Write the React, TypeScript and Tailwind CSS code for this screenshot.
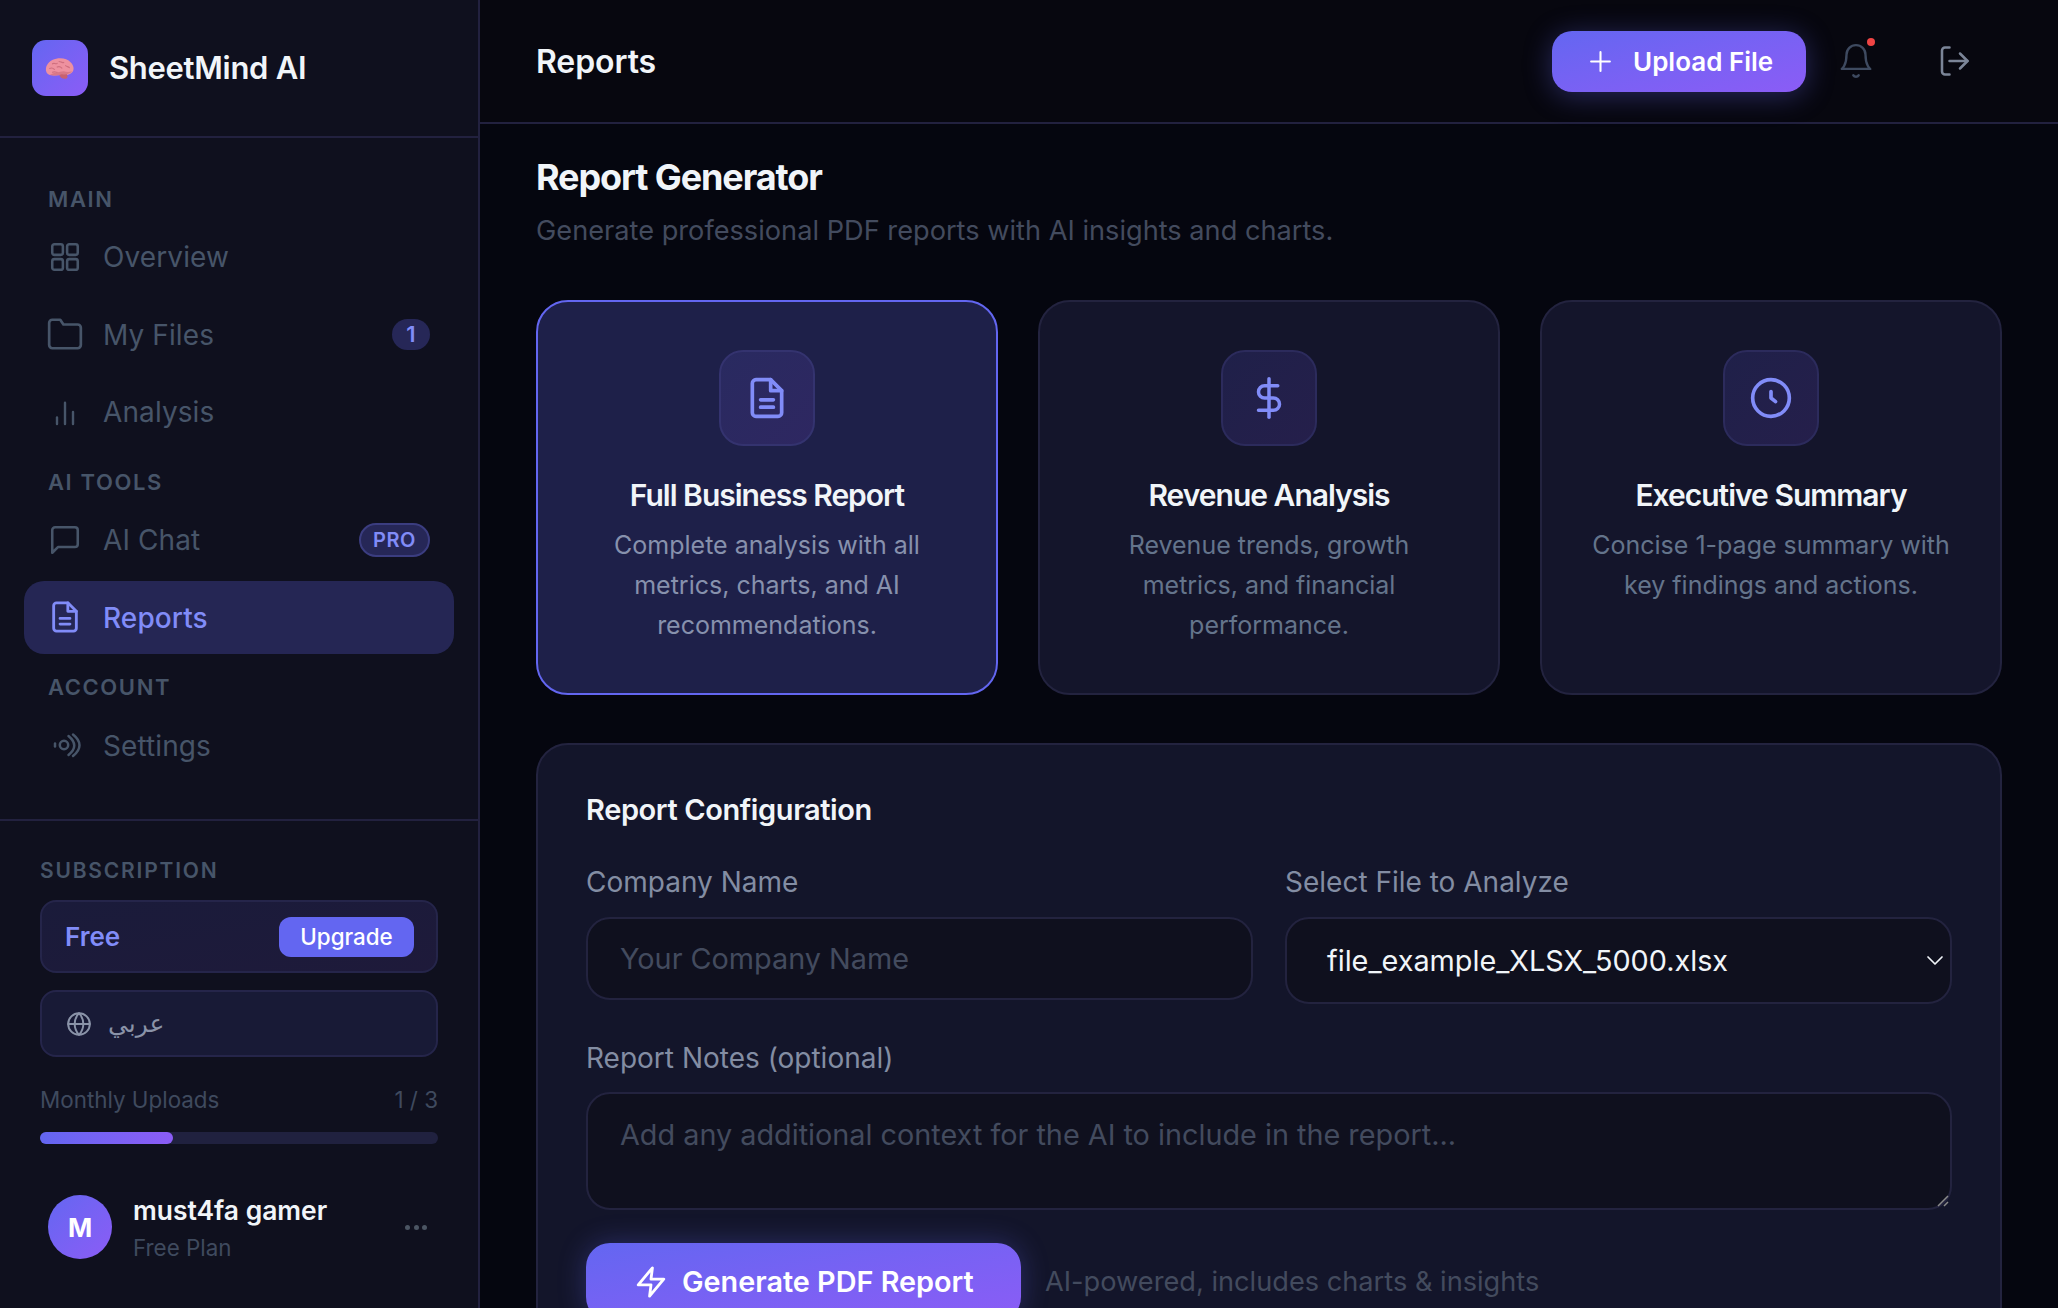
import React from "react";

const font = "font-['Inter','DejaVu_Sans',sans-serif]";

function Ic({ className, children, sw = 2 }: { className?: string; children: React.ReactNode; sw?: number }) {
  return (
    <svg viewBox="0 0 24 24" fill="none" stroke="currentColor" strokeWidth={sw} strokeLinecap="round" strokeLinejoin="round" className={className}>
      {children}
    </svg>
  );
}

const DocIcon = ({ className }: { className?: string }) => (
  <Ic className={className}>
    <path d="M14 2H6a2 2 0 0 0-2 2v16a2 2 0 0 0 2 2h12a2 2 0 0 0 2-2V8z" />
    <path d="M14 2v6h6" />
    <path d="M8.500 13h7M8.500 17h7" />
  </Ic>
);

function Brain() {
  return (
    <svg viewBox="0 0 32 24" className="w-[30px] h-[23px]">
      <path d="M5 19c-3-1-4.500-4-4-7C1.500 7 6 2.500 12 1.500c6-1 12 0 15.500 4 3 3 4 7 2 10-1.500 2-4 3.500-7 3.500-1 0-3 0-4 0-4 0-9 1-13.500 0z" fill="#ee919f" />
      <path d="M15 18c1 3 3 5 6 5 2 0 3-1 3-2.500L23 17z" fill="#c7616f" />
      <path d="M5 19c5 1 9 0 13-1 4 1 8 0 11-3-3 1-6 1-9 0-5 1-10 1-15 4z" fill="#d97887" />
      <path d="M8 7c2-1.500 3 1 5-.5M15 4.500c2 0 3 2 5 1M5 12c2-1 4 0 5 1M13 10.500c2-1 4 0 5 1M22 9c1 1 3 1 4 2M8 16c2-1 3 0 5 0" stroke="#cf6f7f" strokeWidth="1.200" fill="none" strokeLinecap="round" />
    </svg>
  );
}

function SectionLabel({ children, className = "" }: { children: React.ReactNode; className?: string }) {
  return <div className={`text-[22px] leading-[28px] font-semibold tracking-[1.6px] text-[#475569] ${className}`}>{children}</div>;
}

function NavItem({ icon, label, active, right }: { icon: React.ReactNode; label: string; active?: boolean; right?: React.ReactNode }) {
  return (
    <div className={`flex items-center h-[73px] rounded-[20px] pl-[25px] pr-[24px] mb-[4.500px] ${active ? "bg-[#252654] text-[#818cf8] font-medium" : "text-[#475569] font-normal"}`}>
      <div className="w-[32px] h-[32px] flex items-center justify-center shrink-0">{icon}</div>
      <span className="ml-[22px] pt-[1px] text-[28px] leading-none tracking-[0.1px]">{label}</span>
      {right && <div className="ml-auto">{right}</div>}
    </div>
  );
}

function Sidebar() {
  return (
    <aside className="w-[480px] shrink-0 h-full bg-[#0f101e] border-r-2 border-[#22213f] flex flex-col">
      <div className="h-[138px] shrink-0 border-b-2 border-[#22213f] flex items-center pl-[32px]">
        <div className="w-[56px] h-[56px] rounded-[14px] bg-gradient-to-br from-[#6366f1] to-[#8b5cf6] flex items-center justify-center">
          <Brain />
        </div>
        <span className="ml-[21px] text-[31px] font-semibold text-[#f1f5f9] tracking-[-0.3px]">SheetMind AI</span>
      </div>
      <nav className="h-[681px] shrink-0 px-[24px] pt-[46.500px]">
        <SectionLabel className="pl-[24px] mb-[7.500px]">MAIN</SectionLabel>
        <NavItem
          label="Overview"
          icon={
            <Ic className="w-[34px] h-[34px] shrink-0" sw={1.800}>
              <rect x="3" y="3" width="7.500" height="7.500" rx="1.500" />
              <rect x="13.500" y="3" width="7.500" height="7.500" rx="1.500" />
              <rect x="3" y="13.500" width="7.500" height="7.500" rx="1.500" />
              <rect x="13.500" y="13.500" width="7.500" height="7.500" rx="1.500" />
            </Ic>
          }
        />
        <NavItem
          label="My Files"
          icon={
            <Ic className="w-[38px] h-[38px] shrink-0" sw={1.700}>
              <path d="M22 19a2 2 0 0 1-2 2H4a2 2 0 0 1-2-2V5a2 2 0 0 1 2-2h5l2 3h9a2 2 0 0 1 2 2z" />
            </Ic>
          }
          right={
            <div className="w-[38px] h-[31px] rounded-full bg-[#262757] text-[#818cf8] text-[22px] font-semibold flex items-center justify-center">1</div>
          }
        />
        <NavItem
          label="Analysis"
          icon={
            <Ic className="w-[32px] h-[32px] shrink-0" sw={1.800}>
              <path d="M18 21v-9M12 21V5M6 21v-5" />
            </Ic>
          }
        />
        <SectionLabel className="pl-[24px] mt-[19.500px] mb-[7.500px]">AI TOOLS</SectionLabel>
        <NavItem
          label="AI Chat"
          icon={
            <Ic className="w-[34px] h-[34px] shrink-0" sw={1.800}>
              <path d="M21 15a2 2 0 0 1-2 2H7l-4 4V5a2 2 0 0 1 2-2h14a2 2 0 0 1 2 2z" />
            </Ic>
          }
          right={
            <div className="w-[71px] h-[34px] rounded-full bg-[#262757] border-2 border-[#3b3d80] text-[#818cf8] text-[20px] font-semibold tracking-[0.5px] flex items-center justify-center">PRO</div>
          }
        />
        <NavItem active label="Reports" icon={<DocIcon className="w-[34px] h-[34px] shrink-0" />} />
        <SectionLabel className="pl-[24px] mt-[19.500px] mb-[7.500px]">ACCOUNT</SectionLabel>
        <NavItem
          label="Settings"
          icon={
            <svg viewBox="0 0 32 32" fill="none" stroke="currentColor" strokeWidth="2.500" strokeLinecap="round" className="w-[32px] h-[32px]">
              <path d="M6 14.500v3" />
              <circle cx="15" cy="16" r="4.200" />
              <path d="M19.500 7Q31 16.500 19.500 26" />
              <path d="M24 5.500Q37 16 24 27" />
            </svg>
          }
        />
      </nav>
      <div className="flex-1 border-t-2 border-[#22213f] px-[40px] pt-[36px]">
        <div className="text-[21px] leading-[28px] font-semibold tracking-[1.8px] text-[#475569]">SUBSCRIPTION</div>
        <div className="mt-[15px] h-[73px] rounded-[16px] border-2 border-[#25254a] bg-gradient-to-br from-[#1a1b3a] to-[#1e1a3a] flex items-center justify-between pl-[23px] pr-[22px]">
          <span className="text-[26px] font-semibold text-[#818cf8]">Free</span>
          <div className="w-[135px] h-[40px] rounded-[12px] bg-[#6366f1] text-white text-[22.400px] font-medium flex items-center justify-center">Upgrade</div>
        </div>
        <div className="mt-[17px] h-[67px] rounded-[16px] border-2 border-[#25254a] bg-[#181a36] flex items-center pl-[24px] text-[#8a93a8]">
          <Ic className="w-[26px] h-[26px]" sw={1.800}>
            <circle cx="12" cy="12" r="10" />
            <path d="M2 12h20" />
            <path d="M12 2a15 15 0 0 1 4 10 15 15 0 0 1-4 10 15 15 0 0 1-4-10 15 15 0 0 1 4-10z" />
          </Ic>
          <span className="ml-[16px] text-[25px] leading-none">عربي</span>
        </div>
        <div className="mt-[28px] flex justify-between text-[22.400px] leading-[30px] text-[#3f4a5e]">
          <span>Monthly Uploads</span>
          <span>1 / 3</span>
        </div>
        <div className="mt-[17px] h-[12px] rounded-full bg-[#20213f]">
          <div className="h-full rounded-full bg-gradient-to-r from-[#6366f1] to-[#8b5cf6] w-[133px]" />
        </div>
        <div className="mt-[47px] flex items-center pl-[8px]">
          <div className="w-[64px] h-[64px] rounded-full bg-gradient-to-br from-[#6366f1] to-[#8b5cf6] text-white text-[26px] font-bold flex items-center justify-center">M</div>
          <div className="ml-[21px] mt-[2px]">
            <div className="text-[26.400px] leading-[34px] font-semibold text-[#f1f5f9]">must4fa gamer</div>
            <div className="mt-[6px] text-[22.400px] leading-[30px] text-[#3f4a5e]">Free Plan</div>
          </div>
          <div className="ml-auto mr-[11px] flex gap-[3.500px]">
            <span className="w-[5px] h-[5px] rounded-full bg-[#4b5563]" />
            <span className="w-[5px] h-[5px] rounded-full bg-[#4b5563]" />
            <span className="w-[5px] h-[5px] rounded-full bg-[#4b5563]" />
          </div>
        </div>
      </div>
    </aside>
  );
}

function Header() {
  return (
    <header className="h-[124px] shrink-0 border-b-2 border-[#22213f] flex items-center pl-[56px] bg-[#07070f]">
      <h1 className="pt-[2px] text-[32px] font-semibold text-[#f1f5f9] tracking-[-0.1px]">Reports</h1>
      <div className="ml-auto h-[61px] w-[254px] rounded-[20px] bg-gradient-to-br from-[#6366f1] to-[#8b5cf6] shadow-[0_4px_28px_rgba(99,102,241,0.35)] text-white flex items-center pl-[36px]">
        <Ic className="w-[25px] h-[25px]">
          <path d="M12 3v18M3 12h18" />
        </Ic>
        <span className="ml-[20px] pt-[1px] text-[26px] font-semibold">Upload File</span>
      </div>
      <div className="relative ml-[30px] w-[40px] h-[40px] flex items-center justify-center text-[#3e4a60]">
        <Ic className="w-[38px] h-[38px]" sw={1.500}>
          <path d="M18 8a6 6 0 0 0-12 0c0 7-3 9-3 9h18s-3-2-3-9" />
          <path d="M13.700 21a2 2 0 0 1-3.400 0" />
        </Ic>
        <span className="absolute right-[1px] top-[-3px] w-[8px] h-[8px] rounded-full bg-[#ef4444]" />
      </div>
      <div className="ml-[60px] mr-[86px] text-[#7b8598]">
        <Ic className="w-[36px] h-[36px]" sw={1.700}>
          <path d="M9 21H6a2 2 0 0 1-2-2V5a2 2 0 0 1 2-2h3" />
          <path d="M16 17l5-5-5-5" />
          <path d="M21 12H9" />
        </Ic>
      </div>
    </header>
  );
}

function ReportCard({ icon, title, lines, active }: { icon: React.ReactNode; title: string; lines: string[]; active?: boolean }) {
  return (
    <div className={`h-[395px] rounded-[32px] border-2 flex flex-col items-center pt-[48px] ${active ? "bg-[#1e2049] border-[#6366f1]" : "bg-[#14152b] border-[#23233f]"}`}>
      <div className={`w-[96px] h-[96px] rounded-[24px] border-2 flex items-center justify-center text-[#818cf8] bg-gradient-to-br ${active ? "from-[#292a60] to-[#2e2761] border-[#34336f]" : "from-[#1f2049] to-[#251f4b] border-[#2c2b5c]"}`}>
        {icon}
      </div>
      <h3 className="mt-[29px] text-[30px] leading-[40px] font-semibold tracking-[-1px] text-[#f1f5f9]">{title}</h3>
      <div className={`mt-[10px] text-[25px] leading-[40px] text-center ${active ? "text-[#8791ad]" : "text-[#64748b]"}`}>
        {lines.map((l) => (
          <div key={l}>{l}</div>
        ))}
      </div>
    </div>
  );
}

function Main() {
  return (
    <main className="flex-1 h-full min-w-0 flex flex-col bg-[#05060f] overflow-hidden">
      <Header />
      <div className="flex-1 min-h-0 pl-[56px] pr-[56px] pt-[28px]">
        <h2 className="text-[36px] leading-[50px] font-bold text-[#f1f5f9] tracking-[-1.1px]">Report Generator</h2>
        <p className="mt-[11px] text-[27.200px] leading-[36px] text-[#434b5e]">Generate professional PDF reports with AI insights and charts.</p>
        <div className="mt-[51px] grid grid-cols-3 gap-[40px]">
          <ReportCard
            active
            title="Full Business Report"
            lines={["Complete analysis with all", "metrics, charts, and AI", "recommendations."]}
            icon={<DocIcon className="w-[44px] h-[44px]" />}
          />
          <ReportCard
            title="Revenue Analysis"
            lines={["Revenue trends, growth", "metrics, and financial", "performance."]}
            icon={
              <Ic className="w-[42px] h-[42px]">
                <path d="M12 1v22" />
                <path d="M17 5H9.500a3.500 3.500 0 0 0 0 7h5a3.500 3.500 0 0 1 0 7H6" />
              </Ic>
            }
          />
          <ReportCard
            title="Executive Summary"
            lines={["Concise 1-page summary with", "key findings and actions."]}
            icon={
              <Ic className="w-[44px] h-[44px]">
                <circle cx="12" cy="12" r="10" />
                <path d="M12 8.500V12l2.500 2" />
              </Ic>
            }
          />
        </div>
        <section className="mt-[48px] h-[700px] rounded-[32px] border-2 border-[#23233f] bg-[#13152a] px-[48px] pt-[45px]">
          <h3 className="text-[29px] leading-[40px] font-semibold tracking-[-0.4px] text-[#f1f5f9]">Report Configuration</h3>
          <div className="mt-[34px] grid grid-cols-2 gap-[32px]">
            <div>
              <div className="text-[28px] leading-[36px] font-normal text-[#838da3]">Company Name</div>
              <div className="mt-[17px] h-[83px] rounded-[24px] border-2 border-[#23233f] bg-[#0f101e] flex items-center pl-[32px] text-[28.800px] text-[#434b5e]">Your Company Name</div>
            </div>
            <div>
              <div className="text-[28px] leading-[36px] font-normal text-[#838da3]">Select File to Analyze</div>
              <div className="mt-[17px] h-[87px] rounded-[24px] border-2 border-[#23233f] bg-[#0f101e] flex items-center pl-[40px] pr-[3px] text-[28.800px] text-[#f1f5f9]">
                <span>file_example_XLSX_5000.xlsx</span>
                <Ic className="ml-auto w-[24px] h-[24px]" sw={1.700}>
                  <path d="M5 8l7 7 7-7" />
                </Ic>
              </div>
            </div>
          </div>
          <div className="mt-[36px] text-[28px] leading-[36px] font-normal text-[#838da3]">Report Notes (optional)</div>
          <div className="relative mt-[16px] h-[118px] rounded-[24px] border-2 border-[#23233f] bg-[#0f101e] pl-[32px] pt-[23px] text-[28.800px] leading-[36px] text-[#434b5e]">
            Add any additional context for the AI to include in the report...
            <svg viewBox="0 0 12 12" className="absolute right-[1px] bottom-[1px] w-[12px] h-[12px]" stroke="#8a8a8a" strokeWidth="1.500">
              <path d="M1 11L11 1M7 11l4-4" />
            </svg>
          </div>
          <div className="mt-[33px] flex items-start">
            <div className="h-[78px] w-[435px] rounded-[24px] bg-gradient-to-br from-[#6366f1] to-[#8b5cf6] shadow-[0_0_28px_rgba(99,102,241,0.3)] text-white flex items-center pl-[48px]">
              <Ic className="w-[34px] h-[34px]">
                <path d="M13 2L3 14h9l-1 8 10-12h-9z" />
              </Ic>
              <span className="ml-[14px] text-[28.800px] font-semibold">Generate PDF Report</span>
            </div>
            <span className="ml-[24px] text-[27.200px] leading-[78px] text-[#434b5e]">AI-powered, includes charts &amp; insights</span>
          </div>
        </section>
      </div>
    </main>
  );
}

export default function App() {
  return (
    <div className={`${font} flex w-full h-screen overflow-hidden bg-[#05060f]`}>
      <Sidebar />
      <Main />
    </div>
  );
}
